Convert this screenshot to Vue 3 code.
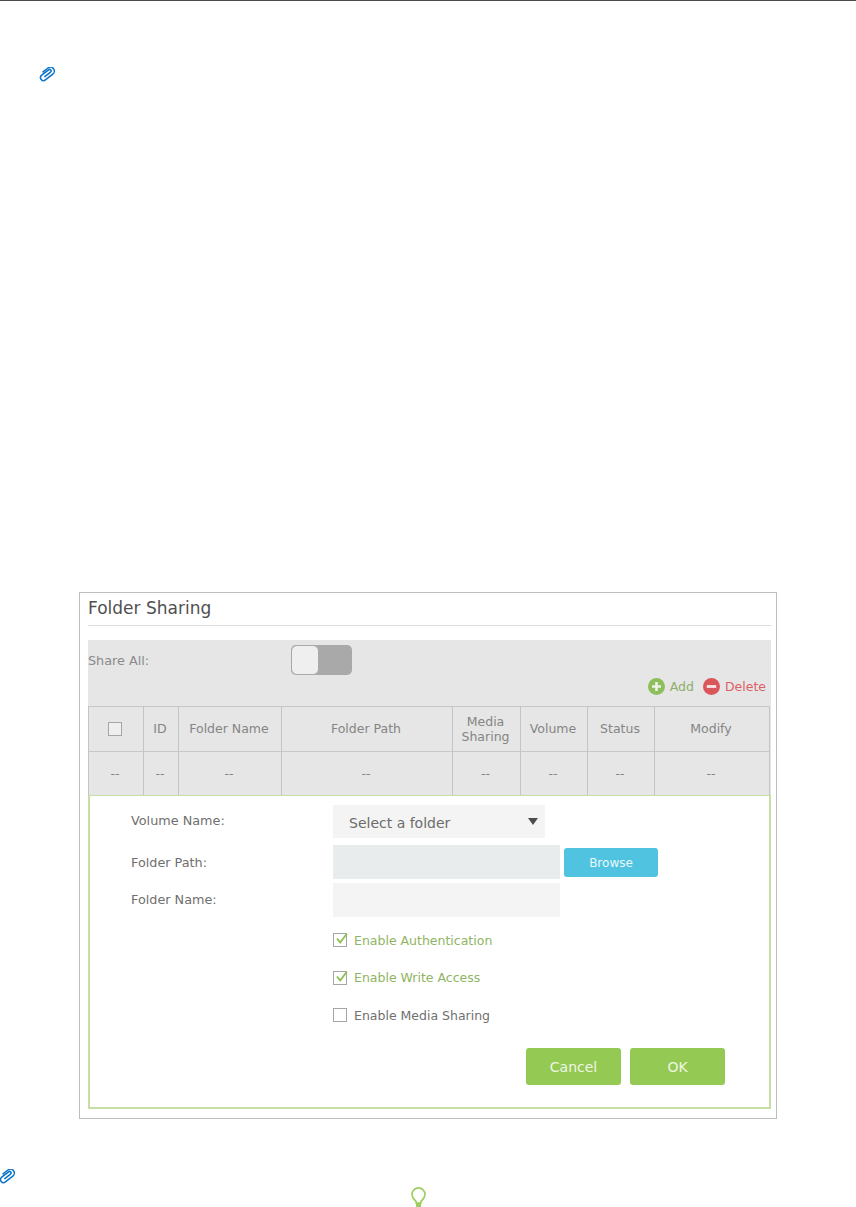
<script setup>
const heads = ['ID', 'Folder Name', 'Folder Path', 'Media Sharing', 'Volume', 'Status', 'Modify']
const cells = ['--', '--', '--', '--', '--', '--', '--', '--']
const checks = [
  { label: 'Enable Authentication', on: true },
  { label: 'Enable Write Access', on: true },
  { label: 'Enable Media Sharing', on: false }
]
</script>

<template>
  <div class="page">
    <div class="top-rule"></div>

    <svg class="clip clip-a" width="16" height="15" viewBox="0 0 16 15" fill="none" aria-hidden="true">
      <path transform="rotate(-38 8 7.5)" d="M5 7.8H12.2a1.5 1.5 0 0 0 0-3H3.4a3 3 0 0 0 0 6H12.8a3.9 3.9 0 0 0 0-7.8H6.5" />
    </svg>

    <section class="frame">
      <h2 class="title">Folder Sharing</h2>

      <div class="panel">
        <div class="share-row">
          <span class="share-label">Share All:</span>
          <div class="toggle"><span class="knob"></span></div>
        </div>
        <div class="actions">
          <span class="action add">
            <svg width="17" height="17" viewBox="0 0 17 17" aria-hidden="true">
              <circle cx="8.5" cy="8.5" r="8.5" fill="#8fbf5c" />
              <path d="M8.5 4v9M4 8.5h9" stroke="#eef3e6" stroke-width="2.6" />
            </svg>
            Add
          </span>
          <span class="action del">
            <svg width="17" height="17" viewBox="0 0 17 17" aria-hidden="true">
              <circle cx="8.5" cy="8.5" r="8.5" fill="#d9565b" />
              <path d="M3.8 8.5h9.4" stroke="#f6e6e6" stroke-width="2.8" />
            </svg>
            Delete
          </span>
        </div>

        <div class="table">
          <div class="cell head first-head"><span class="box"></span></div>
          <div v-for="h in heads" :key="h" class="cell head">{{ h }}</div>
          <div v-for="(c, i) in cells" :key="i" class="cell body">{{ c }}</div>
        </div>
      </div>

      <div class="editor">
        <div class="field first">
          <label class="label">Volume Name:</label>
          <div class="select">
            <span>Select a folder</span>
            <span class="arrow"></span>
          </div>
        </div>
        <div class="field second">
          <label class="label">Folder Path:</label>
          <div class="input path"></div>
          <button class="browse" type="button">Browse</button>
        </div>
        <div class="field third">
          <label class="label">Folder Name:</label>
          <div class="input name"></div>
        </div>

        <div class="checks">
          <div v-for="c in checks" :key="c.label" class="check" :class="{ on: c.on }">
            <span class="box">
              <svg v-if="c.on" width="14" height="13" viewBox="0 0 14 13" fill="none" aria-hidden="true">
                <path d="M3 5.5l3.2 4L12.8 0.8" stroke="#8cc152" stroke-width="1.9" />
              </svg>
            </span>
            <span>{{ c.label }}</span>
          </div>
        </div>

        <div class="buttons">
          <button class="btn" type="button">Cancel</button>
          <button class="btn" type="button">OK</button>
        </div>
      </div>
    </section>

    <svg class="clip clip-b" width="16" height="15" viewBox="0 0 16 15" fill="none" aria-hidden="true">
      <path transform="rotate(-38 8 7.5)" d="M5 7.8H12.2a1.5 1.5 0 0 0 0-3H3.4a3 3 0 0 0 0 6H12.8a3.9 3.9 0 0 0 0-7.8H6.5" />
    </svg>

    <svg class="bulb" width="15" height="20" viewBox="0 0 15 20" fill="none" aria-hidden="true">
      <path d="M5.2 14.8C3.6 12.6 1 11 1 7.4a6.5 6.5 0 0 1 13 0c0 3.6-2.6 5.2-4.2 7.4v1.4H5.2z" stroke="#9ccf5f" stroke-width="1.7" />
      <path d="M5 16.6h5V20H5z" fill="#9ccf5f" />
    </svg>
  </div>
</template>

<style>
html, body { margin: 0; background: #fff; }
</style>

<style scoped>
.page {
  width: 856px;
  height: 1207px;
  overflow: hidden;
  background: #fff;
  font-family: "DejaVu Sans", Verdana, sans-serif;
  font-size: 12.5px;
  color: #7b7b7b;
}
.top-rule { height: 1px; background: #4a4a4a; }
.clip { display: block; }
.clip path { stroke: #0b74c8; stroke-width: 1.5; stroke-linecap: round; }
.clip-a { margin: 66px 0 0 39px; }
.clip-b { margin: 50px 0 0 -1px; }
.bulb { display: block; margin: 3px 0 0 411px; }

.frame {
  box-sizing: border-box;
  width: 698px;
  height: 527px;
  margin: 510px 0 0 79px;
  padding: 0 5px 9px 8px;
  border: 1px solid #bdbdbd;
}
.title {
  box-sizing: border-box;
  height: 33px;
  margin: 0;
  padding-top: 5px;
  border-bottom: 1px solid #dcdcdc;
  font-size: 17px;
  font-weight: 400;
  line-height: 20px;
  color: #4f4f4f;
}
.panel {
  height: 155px;
  margin-top: 14px;
  background: #e6e6e6;
}
.share-row { display: flex; align-items: flex-start; height: 35px; padding-top: 5px; box-sizing: border-box; }
.share-label { width: 203px; padding-top: 8px; font-size: 12.8px; color: #8a8a8a; }
.toggle {
  box-sizing: border-box;
  width: 61px;
  height: 30px;
  background: #a9a9a9;
  border-radius: 5px;
}
.knob {
  display: block;
  box-sizing: border-box;
  width: 28px;
  height: 30px;
  background: #efefef;
  border: 1px solid #a9a9a9;
  border-radius: 6px;
}
.actions {
  display: flex;
  justify-content: flex-end;
  gap: 9px;
  height: 31px;
  padding-right: 5px;
  padding-top: 3px;
  box-sizing: border-box;
}
.action { display: flex; align-items: center; gap: 5px; height: 17px; }
.add { color: #8fae6c; }
.del { color: #dc5f68; }

.table {
  display: grid;
  grid-template-columns: 56px 35px 103px 171px 68px 67px 67px 115px;
  grid-template-rows: 45px 44px;
  width: 682px;
  border-top: 1px solid #c8c8c8;
  box-sizing: border-box;
  height: 89px;
}
.cell {
  display: flex;
  align-items: center;
  justify-content: center;
  box-sizing: border-box;
  padding: 0 5px 1px 3px;
  text-align: center;
  border-right: 1px solid #c4c4c4;
  line-height: 15px;
  color: #858585;
}
.cell:nth-child(8n + 1) { border-left: 1px solid #c4c4c4; }
.head { border-bottom: 1px solid #c8c8c8; }
.first-head { padding: 0 6px 0 4px; }
.table .box { background: #efefef; }

.box {
  box-sizing: border-box;
  position: relative;
  display: block;
  flex: none;
  width: 14px;
  height: 14px;
  border: 1px solid #a6a6a6;
}
.box svg { position: absolute; left: 0; top: -1px; }

.editor {
  box-sizing: border-box;
  height: 314px;
  border: 2px solid #c6dda3;
  border-top: 1px solid #c6dda3;
  padding: 9px 0 0 41px;
  position: relative;
}
.field { display: flex; align-items: flex-start; }
.label {
  width: 202px;
  flex: none;
  font-size: 12.8px;
  color: #6f6f6f;
}
.first { height: 40px; }
.first .label { padding-top: 8px; }
.select {
  box-sizing: border-box;
  display: flex;
  justify-content: space-between;
  align-items: center;
  width: 212px;
  height: 33px;
  padding: 2px 7px 0 16px;
  background: #f4f4f4;
  font-size: 14px;
  color: #6c6c6c;
}
.arrow {
  width: 0;
  height: 0;
  margin-top: -2px;
  border-left: 5.5px solid transparent;
  border-right: 5.5px solid transparent;
  border-top: 7px solid #4c4c4c;
}
.second { height: 38px; }
.second .label { padding-top: 10px; }
.third { height: 50px; }
.third .label { padding-top: 9px; }
.input { width: 227px; height: 34px; }
.path { background: #e9ecec; }
.name { background: #f4f4f4; }
.browse {
  width: 94px;
  height: 29px;
  margin: 3px 0 0 4px;
  padding: 0;
  border: 0;
  border-radius: 3px;
  background: #4fc3e0;
  color: #eaf8fb;
  font: inherit;
  font-size: 12px;
}

.checks { display: flex; flex-direction: column; gap: 23.5px; margin-left: 202px; }
.check { display: flex; align-items: center; gap: 7px; height: 14px; color: #707070; }
.check.on { color: #8fb463; }

.buttons {
  display: flex;
  justify-content: flex-end;
  gap: 9px;
  margin-top: 26px;
  padding-right: 44px;
}
.btn {
  width: 95px;
  height: 37px;
  padding: 0;
  border: 0;
  border-radius: 3px;
  background: #94c954;
  color: #eef6e2;
  font: inherit;
  font-size: 14px;
}
</style>
